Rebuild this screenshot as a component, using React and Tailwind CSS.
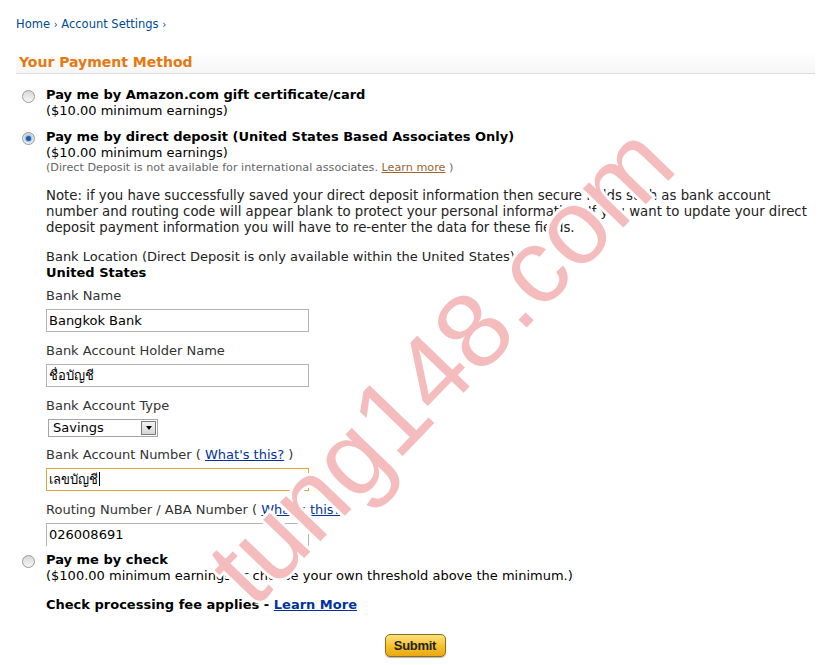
import React from "react";

function Radio({ checked }) {
  return (
    <span className="mt-[3px] flex h-[13px] w-[13px] shrink-0 items-center justify-center rounded-full border border-[#9a9a9a] bg-gradient-to-b from-[#d8d8d8] to-[#f6f6f6]">
      {checked && <span className="h-[5px] w-[5px] rounded-full bg-[#1c5fae] shadow-[0_0_2px_1px_#7fb0e8]" />}
    </span>
  );
}

function Field({ label, children, gap = "mt-[11px]" }) {
  return (
    <div className={gap}>
      <div className="text-[13px] leading-[16px] text-[#333]">{label}</div>
      {children}
    </div>
  );
}

function TextBox({ value, focused, open }) {
  return (
    <div
      className={`mt-[5px] h-[23px] w-[263px] bg-white px-[2px] text-[13px] leading-[21px] text-black ${
        focused ? "border border-[#e2a33c]" : "border border-[#b4b4b4]"
      } ${open ? "border-b-0" : ""}`}
    >
      {value}
      {focused && <span className="ml-[1px] inline-block h-[14px] w-px translate-y-[2px] bg-black" />}
    </div>
  );
}

export default function App() {
  return (
    <div className="relative h-[665px] w-[824px] overflow-hidden bg-white font-['DejaVu_Sans',sans-serif] text-[13px] text-black">
      {/* breadcrumb */}
      <div className="px-[16px] pt-[17px] text-[11.5px] leading-[15px] text-[#004b91]">
        Home <span className="text-[10px]">›</span> Account Settings <span className="text-[10px]">›</span>
      </div>

      {/* header bar */}
      <div className="ml-[16px] mr-[9px] mt-[18px] flex h-[24px] items-center border-b border-[#dcdcdc] bg-gradient-to-b from-white to-[#f6f6f6] px-[3px]">
        <h2 className="text-[14px] font-bold leading-[18px] text-[#e47911]">Your Payment Method</h2>
      </div>

      <div className="pl-[22px] pr-[10px]">
        {/* option 1 */}
        <div className="mt-[13px] flex gap-[11px]">
          <Radio />
          <div className="leading-[16px]">
            <div className="font-bold">Pay me by Amazon.com gift certificate/card</div>
            <div>($10.00 minimum earnings)</div>
          </div>
        </div>

        {/* option 2 */}
        <div className="mt-[10px] flex gap-[11px]">
          <Radio checked />
          <div className="leading-[16px]">
            <div className="font-bold">Pay me by direct deposit (United States Based Associates Only)</div>
            <div>($10.00 minimum earnings)</div>
            <div className="text-[11.2px] leading-[13px] text-[#666]">
              (Direct Deposit is not available for international associates.{" "}
              <a className="text-[#996633] underline">Learn more</a> )
            </div>

            <p className="mt-[14px] pr-[4px] text-[13.3px] leading-[16px] text-[#222]">
              Note: if you have successfully saved your direct deposit information then secure fields such as bank account
              number and routing code will appear blank to protect your personal information. If you want to update your
              direct deposit payment information you will have to re-enter the data for these fields.
            </p>

            <div className="mt-[13px] leading-[16px] text-[#222]">
              Bank Location (Direct Deposit is only available within the United States)
            </div>
            <div className="font-bold leading-[16px]">United States</div>

            <Field label="Bank Name" gap="mt-[7px]">
              <TextBox value="Bangkok Bank" />
            </Field>
            <Field label="Bank Account Holder Name">
              <TextBox value="ชื่อบัญชี" />
            </Field>
            <Field label="Bank Account Type">
              <div className="ml-[2px] mt-[5px] flex h-[18px] w-[110px] items-center justify-between border border-[#a5a5a5] bg-white pl-[4px] pr-[1px]">
                <span className="text-[13px] leading-[16px]">Savings</span>
                <span className="flex h-[14px] w-[15px] items-center justify-center border border-[#7a7a7a] bg-gradient-to-b from-[#f4f4f4] to-[#d6d6d6]">
                  <span className="h-0 w-0 border-x-[3px] border-t-[4px] border-x-transparent border-t-black" />
                </span>
              </div>
            </Field>
            <Field
              gap="mt-[10px]"
              label={<>Bank Account Number ( <a className="text-[#003399] underline">What's this?</a> )</>}
            >
              <TextBox value="เลขบัญชี" focused />
            </Field>
            <Field label={<>Routing Number / ABA Number ( <a className="text-[#003399] underline">What's this?</a> )</>}>
              <TextBox value="026008691" open />
            </Field>
          </div>
        </div>

        {/* option 3 */}
        <div className="mt-[6px] flex gap-[11px]">
          <Radio />
          <div className="leading-[16px]">
            <div className="font-bold">Pay me by check</div>
            <div>($100.00 minimum earnings or choose your own threshold above the minimum.)</div>
            <div className="mt-[13px] font-bold">
              Check processing fee applies - <a className="text-[#003399] underline">Learn More</a>
            </div>
          </div>
        </div>

        <div className="mt-[21px] flex justify-center pr-[6px]">
          <button className="h-[23px] w-[61px] rounded-[5px] border border-[#8a6d1f] bg-gradient-to-b from-[#fde27a] via-[#f7c22c] to-[#e9a810] font-['Liberation_Sans',sans-serif] text-[13px] font-bold leading-[20px] tracking-[-0.3px] text-[#222] shadow-[0_1px_1px_rgba(0,0,0,0.3)]">
            Submit
          </button>
        </div>
      </div>

      {/* watermark */}
      <div className="pointer-events-none absolute left-[440px] top-[364px] -translate-x-1/2 -translate-y-1/2 -rotate-[46deg] whitespace-nowrap font-['Liberation_Sans',sans-serif] text-[106px] leading-none text-[#f4bcbc] [-webkit-text-stroke:6px_white] [paint-order:stroke_fill]">
        tung148.com
      </div>
    </div>
  );
}
